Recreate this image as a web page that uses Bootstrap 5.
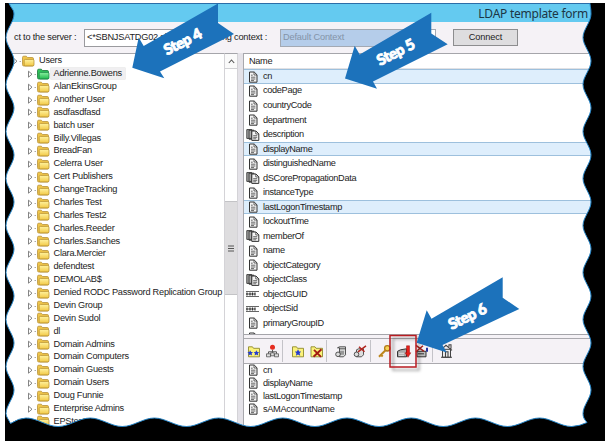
<!DOCTYPE html>
<html lang="en">
<head>
<meta charset="utf-8">
<meta name="viewport" content="width=device-width, initial-scale=1">
<title>LDAP template form</title>
<link href="https://cdn.jsdelivr.net/npm/bootstrap@5.3.0/dist/css/bootstrap.min.css" rel="stylesheet">
<style>
body{width:610px;height:447px;overflow:hidden;background:#fff;font-family:"Liberation Sans",Arial,sans-serif;font-size:9.2px;letter-spacing:-.33px;line-height:1;color:#222}
.stage{width:600px;height:438px;margin:3px 0 0 5px;background:#f5f2f6;overflow:hidden}
.titlebar{height:19px;background:#64caf0;border-top:1px solid #2b6da8;font:12px "Noto Sans","Open Sans",sans-serif;letter-spacing:-.25px;color:#1c3645;padding-right:17px}
.connbar{height:31px;padding-left:9px;background:#f5f2f6}
.lbl{white-space:nowrap;letter-spacing:-.2px}
.lbl-a{width:70px}.lbl-b{width:57px;margin:0 13px 0 6px}
.combo{height:18px;border:1px solid #9a9a9e;background:#fff;padding-left:2px;white-space:nowrap;overflow:hidden}
.combo-a{width:120px;letter-spacing:-.2px}
.combo-b{width:156px;background:#b5cdea;border-color:#a3a9b3;color:#8493a8;letter-spacing:-.15px}
.combo-end{width:20px;height:16px;background:#fff;border-left:1px solid #aaa}
.conn{width:65px;height:17px;border:1px solid #8d8d8f;border-radius:0;background:#dedddf;font-size:9.2px;letter-spacing:-.1px;line-height:1;color:#222;padding:0;margin-left:17px}
.tree{width:219px;background:#fff;border-top:1px solid #a5a5aa;padding-top:.5px;letter-spacing:-.24px}
.trow{height:12.89px;padding-left:21.5px;white-space:nowrap}
.trow.root{padding-left:7px}
.trow .nm{padding:1px 3px;margin-left:1px}
.trow.on .nm{background:#f0eff1;box-shadow:0 0 0 .5px #ddd}
.sb{width:14px;background:#fff;border-left:1px solid #d4d3d7;border-right:1px solid #d4d3d7;border-top:1px solid #a5a5aa}
.sb-up{height:15px;border-bottom:1px solid #d0d0d3;background:#fafafa}
.sb-gap{height:132px}
.sb-thumb{height:94px;background:#dedddf;border:1px solid #c3c3c6;border-width:1px 0}
.split{width:6px;background:#e4e2e8;border-right:1px solid #a8a8ad}
.attrs{height:282px;background:#fff;border-top:1px solid #a5a5aa;border-bottom:1px solid #a5a5aa;overflow:hidden}
.hd{height:15.3px;padding-left:5px;border-bottom:1px solid #e1e1e4}
.arow{height:14.53px;padding-left:2px;border:1px solid transparent;border-width:1px 0;white-space:nowrap}
.arow span,.prow span{margin-left:3px}
.arow.sel{background:#deeefc;border-color:#9dc0dd}
.tools{height:26px;margin-top:3px;border:1px solid #aaa9ae;border-width:1px 0;background:#f5f2f6;padding-left:3px}
.picked{background:#fff;padding-top:0}
.prow{height:12.9px;padding-left:2px;white-space:nowrap}
.overlay{left:0;top:0;pointer-events:none}
.step{font:900 15px Lato,sans-serif;fill:#fff;stroke:#fff;stroke-width:.9;letter-spacing:.3px}
svg{flex:none;display:block}
</style>
<script src="https://cdn.jsdelivr.net/npm/bootstrap@5.3.0/dist/js/bootstrap.bundle.min.js"></script>
</head>
<body class="position-relative">
<svg width="0" height="0" class="position-absolute" aria-hidden="true">
<defs>
<linearGradient id="gy" x2="0" y2="1"><stop offset="0" stop-color="#fff3a0"/><stop offset="1" stop-color="#f2c845"/></linearGradient>
<linearGradient id="gg" x2="0" y2="1"><stop offset="0" stop-color="#8af0a0"/><stop offset="1" stop-color="#22ba4e"/></linearGradient>
<symbol id="fy" viewBox="0 0 14 12"><path d="M1.500 9.500V2.500q0-1.300 1.300-1.300h2.500l1.200 1.300h4.700q1.300 0 1.300 1.300v6.200q0 1-1 1H2.800q-1.300 0-1.300-1.500z" fill="#efc54a" stroke="#b8923a" stroke-width=".8"/><path d="M3.200 9.700V5.600q0-1.200 1.200-1.200h7.400q1.200 0 1.200 1.200v4.100q0 1.200-1.200 1.200H4.400q-1.200 0-1.200-1.200z" fill="url(#gy)" stroke="#b08a2c" stroke-width=".7"/></symbol>
<symbol id="fg" viewBox="0 0 14 12"><path d="M1.500 9.500V2.500q0-1.300 1.300-1.300h2.500l1.200 1.300h4.700q1.300 0 1.300 1.300v6.200q0 1-1 1H2.800q-1.300 0-1.300-1.500z" fill="#2fc25a" stroke="#19743a" stroke-width=".8"/><path d="M3.200 9.700V5.600q0-1.200 1.200-1.200h7.400q1.200 0 1.200 1.200v4.100q0 1.200-1.200 1.200H4.400q-1.200 0-1.200-1.200z" fill="url(#gg)" stroke="#178043" stroke-width=".7"/></symbol>
<symbol id="doc" viewBox="0 0 14 12"><path d="M3.500 1h4.700l2.800 2.800v7.400H3.500z" fill="#f4f4f4" stroke="#333" stroke-width="1"/><path d="M8 1v3h3M5 4.200h1.700M5 6.200h4.400M5 8h4.400M5 9.600h3" fill="none" stroke="#444" stroke-width=".8"/></symbol>
<symbol id="docs" viewBox="0 0 14 12"><path d="M.8.600h5v8.800h-5zM3 1.200h5v9H3z" fill="#aaa" stroke="#333" stroke-width=".9"/><path d="M5.800 2h4.200l2.800 2.800v6.600h-7z" fill="#f4f4f4" stroke="#333" stroke-width="1"/><path d="M9.800 2v3h3M7.200 6.700h4M7.200 8.300h4M7.200 9.800h3" fill="none" stroke="#444" stroke-width=".8"/></symbol>
<symbol id="bin" viewBox="0 0 14 12"><path d="M0 3.500h13M0 8.500h13" stroke="#666" stroke-width="1"/><path d="M0 6h9" stroke="#555" stroke-width="1"/><path d="M1 4.500v3M4 4.500v3M6.500 4.500v3M9 4.500v3" stroke="#333" stroke-width="1.200"/></symbol>
</defs></svg>

<main class="stage d-flex flex-column">
  <header class="titlebar d-flex align-items-center justify-content-end"><span>LDAP template form</span></header>
  <section class="connbar d-flex align-items-center">
    <span class="lbl lbl-a">ct to the server :</span>
    <div class="combo combo-a d-flex align-items-center">&lt;*SBNJSATDG02.sbnj.local</div>
    <span class="lbl lbl-b text-end">ng context :</span>
    <div class="combo combo-b d-flex align-items-center justify-content-between"><span>Default Context</span><span class="combo-end"></span></div>
    <button class="btn conn" type="button">Connect</button>
  </section>
  <div class="d-flex flex-grow-1 overflow-hidden">
    <nav class="tree flex-shrink-0" id="tree"></nav>
    <div class="sb flex-shrink-0">
      <div class="sb-up d-flex align-items-center justify-content-center"><svg width="7" height="5" viewBox="0 0 7 5"><path d="M.8 4L3.500 1l2.700 3" fill="none" stroke="#555" stroke-width="1.100"/></svg></div>
      <div class="sb-gap"></div>
      <div class="sb-thumb d-flex align-items-center justify-content-center"><svg width="6" height="7" viewBox="0 0 6 7"><path d="M0 1h6M0 3.500h6M0 6h6" stroke="#555"/></svg></div>
    </div>
    <div class="split flex-shrink-0"></div>
    <div class="d-flex flex-column flex-grow-1">
      <section class="attrs"><div class="hd d-flex align-items-center">Name</div><div id="attrs"></div></section>
      <div class="tools d-flex align-items-center">
        <svg width="208" height="22" viewBox="247 341 208 22">
          <path d="M282.500 339v24M326.500 339v24M370.500 339v24M432.500 339v24" stroke="#c4c3c8"/>
          <g transform="translate(0 .8)">
          <g fill="#fbf27a" stroke="#8f8a2c" stroke-width=".9"><path d="M248.500 347h4l1 1.500h6v8.500h-11zM292.500 347h4l1 1.500h6v8.500h-11zM311 347h4l1 1.500h6.500v8.500H311z"/></g>
          <path d="M250 350.500l1.200 1.800h1.800l-1.400 1.500.5 2-1.900-1.100-1.800 1.100.4-2-1.300-1.500h1.800zM256.200 350.500l1.200 1.800h1.800l-1.400 1.500.5 2-1.900-1.100-1.800 1.100.4-2-1.300-1.500h1.800zM298 349.500l1.200 2.300h2l-1.600 1.600.6 2.500-2.200-1.300-2.100 1.300.5-2.500-1.600-1.600h2.100z" fill="#263ed0"/>
          <path d="M314 350l7 7M321.500 349.500l-8 7.500" stroke="#a21a12" stroke-width="1.900"/>
          <path d="M272.500 350v4M268.500 354v-2h8v2" fill="none" stroke="#555"/><circle cx="272.500" cy="347.500" r="2.500" fill="#e52d20"/>
          <path d="M266.500 354h4v3h-4zM274.500 354h4v3h-4zM270.700 353h3.500v3h-3.500z" fill="#ddd" stroke="#555" stroke-width=".8"/>
          <g fill="#ddd" stroke="#444" stroke-width=".9"><path d="M337.500 348l2-1h6v8l-2 2h-4v-9zM339.500 349h6M356.500 350l2-1h5v6l-2 2h-5z"/><circle cx="338" cy="354.500" r="2.300"/><circle cx="356.500" cy="354.500" r="2.300"/><path d="M341 351v4M343 351v4"/></g>
          <path d="M359 347l5.500 5M366 346l-8 6" stroke="#b32620" stroke-width="1.500"/>
          <circle cx="387.300" cy="348.500" r="2.700" fill="#f8d456" stroke="#b17b1a" stroke-width="1.300"/><path d="M385.500 350.500l-6.500 6.500M381 355l1.700 1.700" stroke="#bd861d" stroke-width="2"/>
          <path d="M397.500 351.500l3-1.500 6-1v8h-9z" fill="#aaa" stroke="#333"/><path d="M399 353.500h5M399 355.500h5" stroke="#eee" stroke-width=".8"/><path d="M406.500 346h3v7h1.300l-2.800 4.500-2.800-4.500h1.300z" fill="#e51f1b" stroke="#9c1111" stroke-width=".5"/>
          <path d="M417 351.500h9v5.500h-9z" fill="#bbb" stroke="#333"/><path d="M418 354h6" stroke="#333"/><path d="M416 345.500l8 6M423 346l-7 6" stroke="#a4211c" stroke-width="1.500"/><path d="M426 348h2v4h-2z" fill="#2434a2"/>
          <path d="M442.500 349.500h8v8h-8z" fill="#eee" stroke="#444"/><path d="M441 350l5-4.500 6 5M449 347v-2h2v4M448 357v-5h-2.500v5M441 357.500h11" fill="none" stroke="#444" stroke-width="1.100"/>
          </g>
        </svg>
      </div>
      <section class="picked flex-grow-1" id="picked"></section>
    </div>
  </div>
</main>

<svg class="overlay position-absolute" width="610" height="447" viewBox="0 0 610 447">
  <defs><filter id="sh" x="-20%" y="-20%" width="150%" height="150%"><feDropShadow dx="3" dy="3" stdDeviation="1.500" flood-color="#000" flood-opacity=".4"/></filter></defs>
  <rect x="390" y="335.500" width="26" height="31.500" fill="none" stroke="#b81c22" stroke-width="1.500" filter="url(#sh)"/>
  <g fill="#1c72bb">
    <path d="M132.300 67.700L138.700 37.500L143.700 46L218 3.500V23L234 34L160 71.500L164.300 78.300Z"/>
    <path d="M345 78.500L354.700 45.700L359.700 54.500L431.300 12.700V33.500L447.700 44.300L373 81.500L377 88.700Z"/>
    <path d="M416.700 342.700L426.700 310.300L431.500 318.700L502.700 277.300V297.700L519.300 309L442.500 345L446.700 352.500Z"/>
  </g>
  <g class="step">
    <text transform="translate(167 55.500) rotate(-27)" textLength="41">Step 4</text>
    <text transform="translate(380 66) rotate(-27)" textLength="41">Step 5</text>
    <text transform="translate(451.500 330) rotate(-26)" textLength="41">Step 6</text>
  </g>
  <path id="frame" fill="#000" stroke="#2585c8" stroke-width="1" fill-rule="evenodd"/>
  <path d="M0 0H610V447H0ZM5 3V441H605V3Z" fill="#fff" fill-rule="evenodd"/>
</svg>

<script>
const icon=(id,w=14)=>`<svg width="${w}" height="12"><use href="#${id}"/></svg>`;
const users=["Adrienne.Bowens","AlanEkinsGroup","Another User","asdfasdfasd","batch user","Billy.Villegas","BreadFan","Celerra User","Cert Publishers","ChangeTracking","Charles Test","Charles Test2","Charles.Reeder","Charles.Sanches","Clara.Mercier","defendtest","DEMOLAB$","Denied RODC Password Replication Group","Devin Group","Devin Sudol","dl","Domain Admins","Domain Computers","Domain Guests","Domain Users","Doug Funnie","Enterprise Admins","EPStest"];
const twist='<svg width="9" height="12" viewBox="0 0 9 12"><path d="M1.500 3.200v6L5 6.200z" fill="#fff" stroke="#666" stroke-width=".8"/><path d="M7.500 6.500h1.500" stroke="#aaa"/></svg>';
tree.innerHTML='<div class="trow root d-flex align-items-center">'+twist+icon('fy')+'<span class="nm">Users</span></div>'+
 users.map((u,i)=>`<div class="trow d-flex align-items-center${i?'':' on'}">${twist}${icon(i?'fy':'fg')}<span class="nm">${u}</span></div>`).join('');
const attributes=["cn","codePage","countryCode","department","description","displayName","distinguishedName","dSCorePropagationData","instanceType","lastLogonTimestamp","lockoutTime","memberOf","name","objectCategory","objectClass","objectGUID","objectSid","primaryGroupID",""];
const multi=["description","dSCorePropagationData","memberOf","objectClass"],binary=["objectGUID","objectSid"],chosen=["cn","displayName","lastLogonTimestamp"];
document.getElementById('attrs').innerHTML=attributes.map(a=>`<div class="arow d-flex align-items-center${chosen.includes(a)?' sel':''}">${icon(multi.includes(a)?'docs':binary.includes(a)?'bin':'doc')}<span>${a}</span></div>`).join('');
picked.innerHTML=["cn","displayName","lastLogonTimestamp","sAMAccountName"].map(a=>`<div class="prow d-flex align-items-center">${icon('doc')}<span>${a}</span></div>`).join('');

// Torn-edge border: waves down the left, along the bottom, and up the right
let d='M0 0H610V447H0ZM8 -2C9 8 14 8 14 14';
for(let i=0;i<17;i++)d+=`c0 8 ${i%2?8:-8} 15.500 ${i%2?8:-8} 23.500`;
d+='C6 417 9 420 10.500 423.500Q19 418 26 418';
for(let i=0;i<17;i++)d+=`c11 0 21 ${i%2?-8.5:8.5} 32.100 ${i%2?-8.5:8.5}`;
d+='Q580 426 587 422.500C584 419 583 417 583 413.500';
for(let i=0;i<17;i++)d+=`c0 -8 ${i%2?-8:8} -15.500 ${i%2?-8:8} -23.500`;
d+='C591 8 590 5 589 -2Z';
frame.setAttribute('d',d);
</script>
</body>
</html>
